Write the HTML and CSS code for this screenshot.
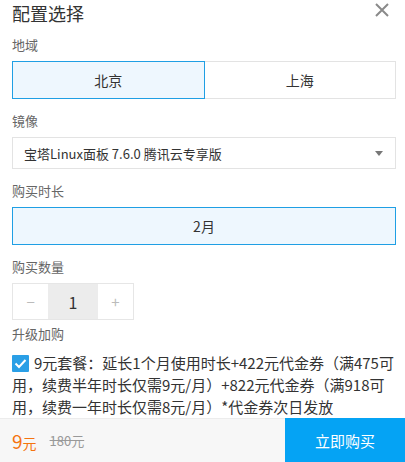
FILE: index.html
```html
<!DOCTYPE html>
<html lang="zh">
<head>
<meta charset="utf-8">
<link rel="stylesheet" href="styles.css">
</head>
<body>
<div class="sheet">
  <div class="content">
    <div class="header">
      <h1 class="title">配置选择</h1>
      <svg class="close" width="14" height="14" viewBox="0 0 14 14"><path d="M1 1L13 13M13 1L1 13" stroke="#8a8a8a" stroke-width="2" fill="none"/></svg>
    </div>
    <div class="label first">地域</div>
    <div class="seg">
      <div class="seg-item active">北京</div>
      <div class="seg-item">上海</div>
    </div>
    <div class="label">镜像</div>
    <div class="select">
      <span>宝塔Linux面板 7.6.0 腾讯云专享版</span>
      <span class="arrow"></span>
    </div>
    <div class="label">购买时长</div>
    <div class="seg">
      <div class="seg-item active">2月</div>
    </div>
    <div class="label">购买数量</div>
    <div class="stepper">
      <div class="step-btn">−</div>
      <div class="step-val">1</div>
      <div class="step-btn">+</div>
    </div>
    <div class="label tight">升级加购</div>
    <div class="addon">
      <span class="check"><svg width="17" height="17" viewBox="0 0 17 17"><path d="M3.5 8.5L7 12L13.5 5" stroke="#fff" stroke-width="2" fill="none"/></svg></span>9元套餐：延长1个月使用时长+422元代金券（满475可用，续费半年时长仅需9元/月）+822元代金券（满918可用，续费一年时长仅需8元/月）*代金券次日发放
    </div>
  </div>
  <div class="footer">
    <div class="price">
      <span class="now"><b>9</b>元</span>
      <span class="old">180元</span>
    </div>
    <div class="buy">立即购买</div>
  </div>
</div>
</body>
</html>
```
FILE: styles.css
```css
* { box-sizing: border-box; }
html, body { margin: 0; padding: 0; background: #fff; }
body {
  font-family: "Noto Sans CJK SC", "Noto Sans", sans-serif;
  color: #333;
}
.sheet {
  width: 405px;
  height: 462px;
  display: flex;
  flex-direction: column;
  overflow: hidden;
}
.content {
  flex: 1;
  padding: 0 9px 0 12px;
  overflow: hidden;
}
.header {
  height: 26px;
  display: flex;
  align-items: center;
  justify-content: space-between;
}
.title {
  margin: 0;
  font-size: 18px;
  font-weight: 400;
  line-height: 26px;
  color: #333;
}
.close { margin-right: 7px; margin-top: -6px; }
.label {
  font-size: 13px;
  line-height: 20px;
  color: #666;
  margin-top: 12px;
  margin-bottom: 6px;
}
.label.first { margin-top: 9px; }
.label.tight { margin-top: 4px; margin-bottom: 8px; }
.seg {
  display: flex;
  height: 38px;
}
.seg-item {
  flex: 1;
  display: flex;
  align-items: center;
  justify-content: center;
  font-size: 14px;
  color: #333;
  border: 1px solid #e3e3e3;
  margin-left: -1px;
}
.seg-item:first-child { margin-left: 0; }
.seg-item.active {
  border-color: #1f9fe4;
  background: #eef7fe;
  position: relative;
  z-index: 1;
}
.select {
  height: 32px;
  border: 1px solid #e3e3e3;
  display: flex;
  align-items: center;
  justify-content: space-between;
  padding: 0 12px 0 11px;
  font-size: 13px;
  color: #333;
}
.arrow {
  width: 0;
  height: 0;
  border-left: 4px solid transparent;
  border-right: 4px solid transparent;
  border-top: 5px solid #777;
}
.stepper {
  display: flex;
  width: 122px;
  height: 37px;
  border: 1px solid #e6e6e6;
}
.step-btn {
  width: 36px;
  display: flex;
  align-items: center;
  justify-content: center;
  color: #bbb;
  font-size: 15px;
}
.step-val {
  width: 50px;
  background: #ececec;
  display: flex;
  align-items: center;
  justify-content: center;
  font-size: 16px;
  color: #333;
}
.addon {
  font-size: 15px;
  line-height: 22px;
  color: #333;
}
.check {
  display: inline-block;
  width: 17px;
  height: 17px;
  background: #2a9fe6;
  border-radius: 1px;
  vertical-align: -3px;
  margin-right: 5px;
}
.check svg { display: block; }
.footer {
  height: 44px;
  display: flex;
  flex-shrink: 0;
}
.price {
  flex: 1;
  background: #f7f7f7;
  border-top: 1px solid #ececec;
  display: flex;
  align-items: center;
  padding-left: 12px;
  gap: 13px;
}
.now {
  color: #f5740f;
  font-size: 14px;
}
.now b {
  font-weight: 400;
  font-size: 19px;
}
.old {
  color: #999;
  font-size: 13px;
  text-decoration: line-through;
}
.buy {
  width: 120px;
  background: #05a3f4;
  color: #fff;
  font-size: 15px;
  display: flex;
  align-items: center;
  justify-content: center;
}
```
